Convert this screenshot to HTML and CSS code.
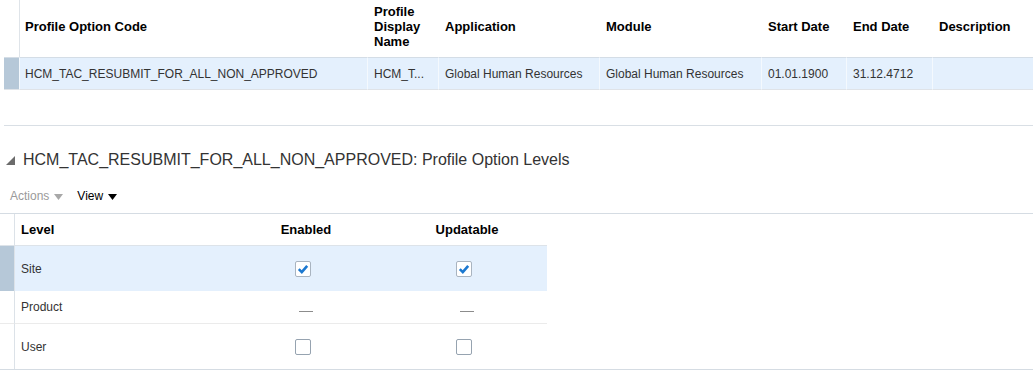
FILE: index.html
```html
<!DOCTYPE html>
<html lang="en">
<head>
  <meta charset="UTF-8">
  <title>Manage Profile Options</title>
  <link rel="stylesheet" href="styles.css">
</head>
<body>
  <!-- Search results -->
  <div class="grid grid-results">
    <div class="cell head gutter"></div>
    <div class="cell head first">Profile Option Code</div>
    <div class="cell head">Profile<br>Display<br>Name</div>
    <div class="cell head">Application</div>
    <div class="cell head">Module</div>
    <div class="cell head">Start Date</div>
    <div class="cell head">End Date</div>
    <div class="cell head">Description</div>

    <div class="cell row selected gutter"></div>
    <div class="cell row selected first">HCM_TAC_RESUBMIT_FOR_ALL_NON_APPROVED</div>
    <div class="cell row selected">HCM_T...</div>
    <div class="cell row selected">Global Human Resources</div>
    <div class="cell row selected">Global Human Resources</div>
    <div class="cell row selected">01.01.1900</div>
    <div class="cell row selected">31.12.4712</div>
    <div class="cell row selected last"></div>
  </div>

  <div class="divider"></div>

  <!-- Levels section -->
  <h2 class="section-title">
    <svg class="disclosure" width="9" height="9" viewBox="0 0 9 9"><polygon points="9,0 9,9 0,9" fill="#6b6b6b"/></svg>
    HCM_TAC_RESUBMIT_FOR_ALL_NON_APPROVED: Profile Option Levels
  </h2>

  <div class="toolbar">
    <span class="menu disabled">Actions
      <svg width="9" height="6" viewBox="0 0 9 6"><polygon points="0,0 9,0 4.5,6" fill="#a8a8a8"/></svg>
    </span>
    <span class="menu">View
      <svg width="9" height="6" viewBox="0 0 9 6"><polygon points="0,0 9,0 4.5,6" fill="#000"/></svg>
    </span>
  </div>

  <div class="levels">
    <div class="grid grid-levels">
      <div class="cell lhead gutter"></div>
      <div class="cell lhead">Level</div>
      <div class="cell lhead center">Enabled</div>
      <div class="cell lhead center">Updatable</div>

      <div class="cell lrow tall selected gutter"></div>
      <div class="cell lrow tall selected">Site</div>
      <div class="cell lrow tall selected center box-cell"><span class="checkbox checked"><svg width="14" height="14" viewBox="0 0 14 14"><polyline points="2.8,7.2 5.8,10.2 11.2,3.8" fill="none" stroke="#1b78d0" stroke-width="2.6"/></svg></span></div>
      <div class="cell lrow tall selected center box-cell"><span class="checkbox checked"><svg width="14" height="14" viewBox="0 0 14 14"><polyline points="2.8,7.2 5.8,10.2 11.2,3.8" fill="none" stroke="#1b78d0" stroke-width="2.6"/></svg></span></div>

      <div class="cell lrow short lined gutter"></div>
      <div class="cell lrow short lined">Product</div>
      <div class="cell lrow short lined center"><span class="dash"></span></div>
      <div class="cell lrow short lined center"><span class="dash"></span></div>

      <div class="cell lrow tall gutter"></div>
      <div class="cell lrow tall">User</div>
      <div class="cell lrow tall center box-cell"><span class="checkbox"></span></div>
      <div class="cell lrow tall center box-cell"><span class="checkbox"></span></div>
    </div>
  </div>
</body>
</html>
```

FILE: styles.css
```css
html, body {
  margin: 0;
  padding: 0;
  background: #fff;
}
body {
  font-family: "Liberation Sans", Arial, sans-serif;
  font-size: 12px;
  color: #333;
}

/* generic grid cells */
.grid {
  display: grid;
}
.cell {
  box-sizing: border-box;
  display: flex;
  align-items: center;
  padding: 0 6px;
  white-space: nowrap;
  overflow: hidden;
}
.cell.center {
  justify-content: center;
}
.cell.gutter {
  padding: 0;
}

/* results table */
.grid-results {
  margin-left: 4px;
  grid-template-columns: 16px 348px 71px 161px 162px 85px 86px 1fr;
}
.grid-results .head {
  height: 57px;
  padding-bottom: 5px;
  font-size: 13px;
  font-weight: bold;
  color: #000;
  line-height: 15px;
}
.grid-results .head.gutter {
  border-right: 1px solid #dfe4e9;
}
.grid-results .first {
  padding-left: 5px;
}
.grid-results .row {
  height: 33px;
  border-top: 1px solid #d4dde6;
  border-bottom: 1px solid #dfe3e8;
  border-right: 1px solid #f4f9fe;
}
.grid-results .row.last {
  border-right: none;
}
.selected {
  background: #e4f0fd;
}
.selected.gutter {
  background: #b6c8d8;
}

.divider {
  margin: 35px 0 0 4px;
  border-top: 1px solid #d9dfe5;
}

/* section header */
.section-title {
  margin: 24px 0 0;
  padding-left: 6px;
  display: flex;
  align-items: center;
  gap: 8px;
  font-size: 16px;
  font-weight: normal;
  line-height: 20px;
  color: #333;
}
.section-title .disclosure {
  margin-top: 1px;
}

.toolbar {
  margin-top: 18px;
  padding-left: 10px;
  display: flex;
  gap: 14px;
  line-height: 16px;
}
.toolbar .menu {
  display: flex;
  align-items: center;
  gap: 5px;
  color: #000;
}
.toolbar .menu.disabled {
  color: #9a9a9a;
}
.toolbar svg {
  margin-top: 2px;
}

/* levels table */
.levels {
  margin-top: 9px;
  border-top: 1px solid #d5dce3;
  border-bottom: 1px solid #d5dce3;
}
.grid-levels {
  grid-template-columns: 15px 210px 162px 160px;
}
.grid-levels .gutter {
  border-right: 1px solid #dce2e8;
}
.grid-levels .lhead {
  height: 32px;
  border-bottom: 1px solid #dde3e9;
  font-size: 13px;
  font-weight: bold;
  color: #000;
  padding-left: 6px;
}
.grid-levels .lhead.gutter {
  padding: 0;
}
.grid-levels .tall {
  height: 45px;
}
.grid-levels .short {
  height: 33px;
}
.grid-levels .lined {
  border-bottom: 1px solid #ebebeb;
}
.grid-levels .box-cell {
  padding-right: 12px;
}

.checkbox {
  box-sizing: border-box;
  display: flex;
  align-items: center;
  justify-content: center;
  width: 16px;
  height: 16px;
  border: 1px solid #96a3b0;
  border-radius: 2px;
  background: #fff;
}
.checkbox.checked {
  border-color: #a9b4c0;
}
.dash {
  display: block;
  width: 14px;
  height: 1px;
  margin-top: 8px;
  background: #8c8c8c;
}
```
